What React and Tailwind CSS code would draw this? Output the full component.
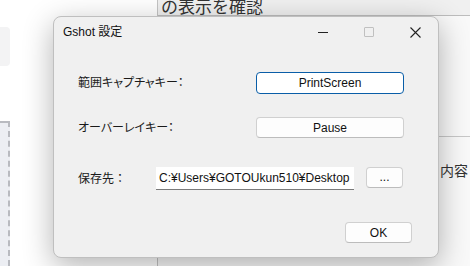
import React from 'react';

const font = { fontFamily: '"Liberation Sans", "Noto Sans CJK JP", sans-serif' };

const Row = ({ label, children, className = '' }) => (
  <div className={`flex items-center ${className}`}>
    <div className="w-[202px] pl-[24px] text-[12px] text-[#1a1a1a] [font-feature-settings:'palt']">{label}</div>
    {children}
  </div>
);

const App = () => {
  return (
    <div className="relative w-[470px] h-[266px] overflow-hidden bg-white flex" style={font}>
      {/* background: left panel */}
      <div className="w-[157px] h-full flex flex-col">
        <div className="mt-[27px] w-[10px] h-[39px] rounded-r-[4px] bg-[#f3f3f4]" />
        <div className="mt-[55px] w-[10px] flex-1 bg-[#eceef3] border-r-2 border-t-2 border-dashed border-[#b8bac0]" />
      </div>
      {/* background: right window */}
      <div className="flex-1 h-full border-l border-[#c4c4c4] flex flex-col bg-[#f9f9f9]">
        <div className="h-[16px] bg-[#f0f0f0] border-b border-[#bdbdbd] overflow-hidden pl-[3px]">
          <div className="text-[17px] leading-[17px] -mt-[1px] text-[#333] whitespace-nowrap">の表示を確認</div>
        </div>
        <div className="flex justify-end mt-[120px]">
          <div className="w-[32px] border-t border-[#c8c8c8]" />
        </div>
        <div className="flex justify-end mt-[27px]">
          <div className="w-[30px] overflow-hidden whitespace-nowrap text-[14px] leading-[14px] text-[#333]">内容</div>
        </div>
      </div>

      {/* dialog */}
      <div className="absolute left-[53px] top-[16px] w-[386px] h-[242px] rounded-[8px] border border-[#bfbfbf] bg-[#f0f0f0] shadow-[0_8px_30px_rgba(0,0,0,0.3)] flex flex-col">
        <div className="h-[30px] flex items-center">
          <div className="pl-[9px] text-[12px] text-[#111] flex-1">Gshot 設定</div>
          <div className="flex items-center h-full">
            <div className="w-[46px] h-full flex items-center justify-center">
              <div className="w-[10px] h-px bg-[#222]" />
            </div>
            <div className="w-[46px] h-full flex items-center justify-center">
              <div className="w-[10px] h-[10px] border border-[#c0c0c0] rounded-[1px]" />
            </div>
            <div className="w-[46px] h-full flex items-center justify-center">
              <svg width="11" height="11" viewBox="0 0 11 11">
                <path d="M0.5 0.5 L10.5 10.5 M10.5 0.5 L0.5 10.5" stroke="#222" strokeWidth="1.1" />
              </svg>
            </div>
          </div>
        </div>

        <Row label="範囲キャプチャキー：" className="mt-[25px]">
          <div className="w-[148px] h-[22px] rounded-[4px] bg-white border border-[#0a5ea8] flex items-center justify-center text-[12px] text-[#111]">
            PrintScreen
          </div>
        </Row>

        <Row label="オーバーレイキー：" className="mt-[23px]">
          <div className="w-[148px] h-[21px] rounded-[4px] bg-[#fdfdfd] border border-[#d0d0d0] border-b-[#bcbcbc] flex items-center justify-center text-[12px] text-[#111]">
            Pause
          </div>
        </Row>

        <div className="flex items-center mt-[29px]">
          <div className="w-[102px] pl-[24px] text-[12px] text-[#1a1a1a]">保存先：</div>
          <div className="w-[198px] h-[23px] bg-white border-b border-[#7a7a7a] flex items-center pl-[3px] text-[12px] text-[#111] whitespace-nowrap overflow-hidden">
            C:¥Users¥GOTOUkun510¥Desktop
          </div>
          <div className="ml-[12px] w-[37px] h-[21px] -mt-[3px] rounded-[4px] bg-[#fdfdfd] border border-[#d0d0d0] border-b-[#bcbcbc] flex items-center justify-center text-[12px] text-[#111]">
            ...
          </div>
        </div>

        <div className="flex justify-end mt-[32px] pr-[26px]">
          <div className="w-[67px] h-[21px] rounded-[4px] bg-[#fdfdfd] border border-[#d0d0d0] border-b-[#bcbcbc] flex items-center justify-center text-[12px] text-[#111]">
            OK
          </div>
        </div>
      </div>
    </div>
  );
};

export default App;
